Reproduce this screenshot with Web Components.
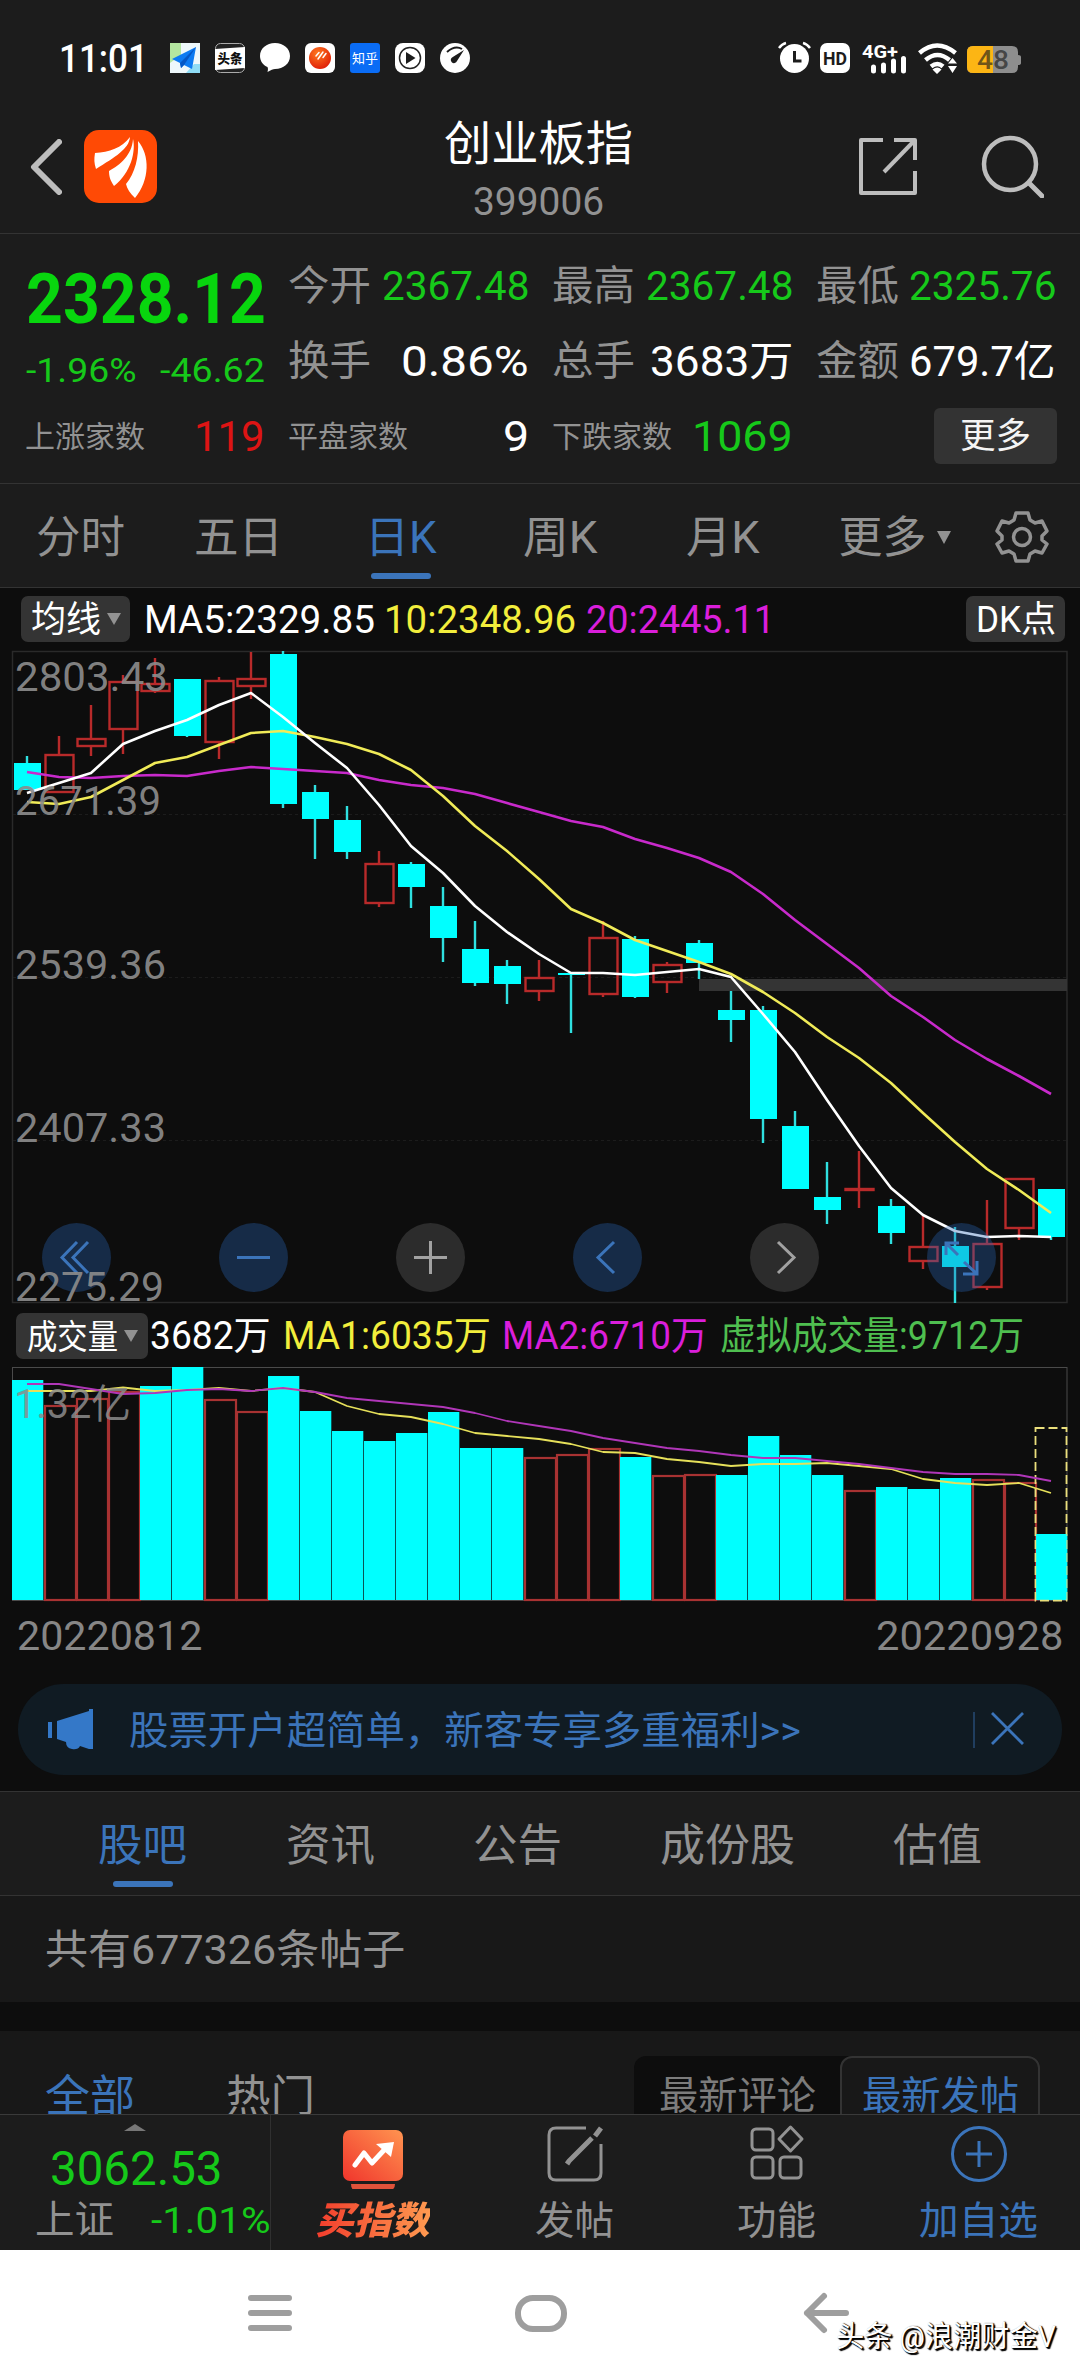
<!DOCTYPE html>
<html lang="zh-CN">
<head>
	<meta charset="utf-8">
	<meta name="viewport" content="width=device-width, initial-scale=1">
	<title>创业板指 399006</title>
	<style type="text/css">
		html, body {
			margin: 0;
			padding: 0;
			background: #0d0d0d;
		}
		body {
			width: 1080px;
			height: 2376px;
			overflow: hidden;
			font-family: Roboto, "Noto Sans CJK SC", sans-serif;
			color: #929292;
		}
	</style>
</head>
<body>
	<stock-page></stock-page>
	<script>
	const BLUE = '#3b74ba';

	function define(name, html, ready) {
		customElements.define(name, class extends HTMLElement {
			connectedCallback() {
				if (this.shadowRoot) return;
				this.attachShadow({mode: 'open'});
				this.shadowRoot.innerHTML = typeof html === 'function' ? html(this) : html;
				if (ready) ready(this);
			}
		});
	}

	// 单行文字，按 w 给出的宽度横向缩放
	define('fit-text', el => `
		<style>
			:host {
				display: block;
				flex: none;
				width: ${el.getAttribute('w')}px;
				font-size: ${el.getAttribute('size')}px;
				line-height: 1;
				height: 1em;
				white-space: nowrap;
			}
			span {
				display: inline-block;
				transform-origin: 0 50%;
			}
		</style>
		<span><slot></slot></span>
	`, el => {
		const span = el.shadowRoot.querySelector('span');
		span.style.transform = `translateY(.03em) scaleX(${el.getAttribute('w') / span.offsetWidth})`;
	});

	define('status-bar', `
		<style>
			:host {
				display: flex;
				box-sizing: border-box;
				height: 100px;
				padding: 16px 59px 0 59px;
				align-items: center;
				justify-content: space-between;
				background: #1c1c1c;
				color: #fff;
			}
			div { display: flex; align-items: center; }
			.left { gap: 15px; }
			.left fit-text { margin-right: 7px; font-weight: 500; }
			svg { display: block; overflow: visible; }
		</style>
		<div class="left">
			<fit-text w="89" size="39">11:01</fit-text>
			<svg width="30" height="30"><path fill="#eef8fb" d="M0 0h30v30H0z"/><path fill="#b4e6a0" d="M0 0h11v12L0 20z"/><path fill="#8fdcf5" d="M16 30l8-9h6v9z"/><path fill="#0d7bf2" d="M26 4L2 16l8 4 1 5 3-3 8 4z"/><path fill="#0557c4" d="M26 4L10 20l1 5 3-3z"/></svg>
			<svg width="30" height="30"><rect x=".5" y=".5" width="29" height="29" rx="5" fill="#222" stroke="#aaa"/><path fill="#fff" d="M0 6l30-2v21L0 27z"/><text x="2.500" y="20" font-size="13" font-weight="900" textLength="25" lengthAdjust="spacingAndGlyphs" fill="#111">头条</text></svg>
			<svg width="30" height="30"><path fill="#fff" d="M15 0c8.500 0 15 5.500 15 13s-6.500 13-15 13c-2 0-4 1-7.500 3 .5-2 .7-3.500 0-5C3 22 0 18 0 13 0 5.500 6.500 0 15 0z"/></svg>
			<svg width="30" height="30"><defs><radialGradient id="o" cx=".4" cy=".3" r=".8"><stop offset="0" stop-color="#ff7a20"/><stop offset="1" stop-color="#dc1505"/></radialGradient></defs><rect width="30" height="30" rx="6" fill="#fff"/><circle cx="15" cy="15" r="11" fill="url(#o)"/><path d="M11 13l3-3.500M13 16l5-7M18 14.500l3-4" stroke="#fff" stroke-width="1.500" stroke-linecap="round"/></svg>
			<svg width="30" height="30"><rect width="30" height="30" rx="3" fill="#0a6cf5"/><text x="2" y="20" font-size="13" textLength="26" lengthAdjust="spacingAndGlyphs" fill="#fff">知乎</text></svg>
			<svg width="30" height="30"><rect width="30" height="30" rx="8" fill="#fff"/><circle cx="15" cy="15" r="10.500" fill="none" stroke="#222" stroke-width="1.500"/><path d="M11 9l9.500 6-9.500 6z" fill="#1c1c1c"/></svg>
			<svg width="30" height="30"><circle cx="15" cy="15" r="15" fill="#fff"/><path d="M7 9q8-7 15-3" fill="none" stroke="#1c1c1c" stroke-width="2"/><path d="M24 7l-7 11a3.200 3.200 0 1 1-4.200-4z" fill="#1c1c1c"/></svg>
		</div>
		<div>
			<svg width="243" height="32" viewBox="777 42 243 32">
				<circle cx="793.500" cy="58.500" r="14.500" fill="#fff"/>
				<path d="M778 48q3-4 7-5M802 43q4 1 7 5" stroke="#fff" stroke-width="2.500" fill="none"/>
				<path d="M793.500 51v10h7" stroke="#1c1c1c" stroke-width="3" fill="none"/>
				<rect x="819" y="43" width="30" height="30" rx="7" fill="#fff"/>
				<text x="822" y="64.500" font-size="18" font-weight="700" textLength="24" lengthAdjust="spacingAndGlyphs" fill="#1c1c1c">HD</text>
				<text x="861" y="57.500" font-size="19" font-weight="700" textLength="36" lengthAdjust="spacingAndGlyphs" fill="#fff">4G+</text>
				<path d="M872.500 67v4M882.500 65v6M892.500 61v10M902.500 58.500v12.500" stroke="#fff" stroke-width="5" stroke-linecap="round"/>
				<g fill="none" stroke="#fff" stroke-width="4.500">
					<path d="M918.500 53q17.500-15 36 0"/><path d="M924.500 60q12-10 24 0"/><path d="M930 66.500q6.500-5 12 0"/>
				</g>
				<path d="M931.500 69.500q5-4 9 0L936 74zM947 63.500l4.500-5.500 4.500 5.500zM947 66h9l-4.500 7z" fill="#fff"/>
				<path d="M972 46h39q6 0 6 6v3q3 0 3 2v6q0 2-3 2v2q0 6-6 6h-39q-6 0-6-6V52q0-6 6-6z" fill="#8e8e8e"/>
				<path d="M972 46h20v27h-20q-6 0-6-6V52q0-6 6-6z" fill="#fcb514"/>
				<text x="976" y="69" font-size="26" font-weight="500" textLength="32" lengthAdjust="spacingAndGlyphs" fill="#1c1c1c" fill-opacity=".65">48</text>
			</svg>
		</div>
	`);

	define('page-header', `
		<style>
			:host {
				display: grid;
				grid-template-columns: 1fr 190px 1fr;
				box-sizing: border-box;
				height: 134px;
				padding: 0 36px 0 29px;
				align-items: center;
				background: #1c1c1c;
				border-bottom: 1px solid #333;
			}
			div { display: flex; align-items: center; }
			.left { gap: 22px; }
			.mid { flex-direction: column; gap: 16px; margin: 6px 0 0 3px; }
			.mid fit-text:first-child { color: #fff; }
			.right { justify-content: flex-end; gap: 64px; }
			svg { display: block; }
		</style>
		<div class="left">
			<svg width="33" height="56"><path d="M30 3L5 28l25 25" fill="none" stroke="#bdbdbd" stroke-width="6" stroke-linecap="round" stroke-linejoin="round"/></svg>
			<svg width="73" height="73" viewBox="0 0 73 73"><rect width="73" height="73" rx="15" fill="#ff4a05"/><g fill="#fff"><path d="M11 23c14-1 27-5 35-16-1 12-15 20-34 32-2-6-2-10-1-16z"/><path d="M49 9c3 12-2 34-19 47-4-6-5-10-5-15 11-6 23-16 24-32z"/><path d="M54 11c12 14 12 39-3 57-5-5-8-9-9-14 9-11 13-27 12-43z"/></g></svg>
		</div>
		<div class="mid">
			<fit-text w="189" size="47">创业板指</fit-text>
			<fit-text w="131" size="38">399006</fit-text>
		</div>
		<div class="right">
			<svg width="59" height="59"><g fill="none" stroke="#bdbdbd" stroke-width="4" stroke-linejoin="round"><path d="M25 3H3v53h54V34"/><path d="M36 3h21v20"/><path d="M57 3L26 35"/></g></svg>
			<svg width="63" height="63"><circle cx="29" cy="29" r="26" fill="none" stroke="#bdbdbd" stroke-width="4.500"/><path d="M48 48l13 13" stroke="#bdbdbd" stroke-width="5" stroke-linecap="round"/></svg>
		</div>
	`);

	define('quote-item', `
		<style>
			:host {
				display: flex;
				align-items: center;
				justify-content: space-between;
				height: 75px;
			}
		</style>
		<slot></slot>
	`);

	define('quote-panel', `
		<style>
			:host {
				display: grid;
				grid-template-columns: 240px 240px 240px 239px;
				grid-template-rows: 75px 75px 75px;
				column-gap: 24px;
				box-sizing: border-box;
				height: 250px;
				padding: 14px 24px 0 25px;
				background: #1c1c1c;
				border-bottom: 1px solid #333;
			}
			.price, .change { box-sizing: border-box; }
			.price { padding: 22px 0 0 1px; }
			.change { padding: 16px 0 0 1px; }
			.green { color: #16c91a; }
			.price .green { font-weight: 700; color: #08d60e; }
			.red { color: #dd1414; }
			.white { color: #fff; }
			button {
				display: flex;
				width: 123px;
				height: 56px;
				padding: 0;
				margin: 0 -1px 0 auto;
				align-items: center;
				justify-content: center;
				border: 0;
				border-radius: 6px;
				background: #333;
				color: #f4f4f4;
				font-family: inherit;
			}
			.label { margin-left: -1px; }
		</style>
		<quote-item class="price"><fit-text class="green" w="240" size="71">2328.12</fit-text></quote-item>
		<quote-item><fit-text class="label" w="83" size="41">今开</fit-text><fit-text class="green" w="147" size="40">2367.48</fit-text></quote-item>
		<quote-item><fit-text class="label" w="83" size="41">最高</fit-text><fit-text class="green" w="147" size="40">2367.48</fit-text></quote-item>
		<quote-item><fit-text class="label" w="83" size="41">最低</fit-text><fit-text class="green" w="147" size="40">2325.76</fit-text></quote-item>
		<quote-item class="change"><fit-text class="green" w="111" size="34">-1.96%</fit-text><fit-text class="green" w="105" size="34">-46.62</fit-text></quote-item>
		<quote-item><fit-text class="label" w="83" size="41">换手</fit-text><fit-text class="white" w="128" size="42">0.86%</fit-text></quote-item>
		<quote-item><fit-text class="label" w="83" size="41">总手</fit-text><fit-text class="white" w="143" size="42">3683万</fit-text></quote-item>
		<quote-item><fit-text class="label" w="83" size="41">金额</fit-text><fit-text class="white" w="147" size="42">679.7亿</fit-text></quote-item>
		<quote-item><fit-text w="120" size="30">上涨家数</fit-text><fit-text class="red" w="71" size="43">119</fit-text></quote-item>
		<quote-item><fit-text class="label" w="120" size="30">平盘家数</fit-text><fit-text class="white" w="26" size="43">9</fit-text></quote-item>
		<quote-item><fit-text class="label" w="120" size="30">下跌家数</fit-text><fit-text class="green" w="101" size="43">1069</fit-text></quote-item>
		<quote-item><button><fit-text w="71" size="35">更多</fit-text></button></quote-item>
	`);

	define('tab-item', el => `
		<style>
			:host {
				display: flex;
				position: relative;
				box-sizing: border-box;
				align-items: center;
				justify-content: center;
				gap: 10px;
				height: 100%;
				padding-top: 3px;
				color: #929292;
			}
			:host([active]) { color: ${BLUE}; }
			:host([active])::after {
				content: "";
				position: absolute;
				left: 50%;
				bottom: 8px;
				width: 60px;
				height: 6px;
				margin-left: -30px;
				border-radius: 3px;
				background: ${BLUE};
			}
		</style>
		<slot></slot>
	`);

	define('tab-bar', el => `
		<style>
			:host {
				display: grid;
				grid-template-columns: ${el.getAttribute('columns')};
				box-sizing: border-box;
				height: 104px;
				background: #1c1c1c;
				border-bottom: 1px solid #333;
			}
			:host([line]) {
				height: 105px;
				border-top: 1px solid #333;
			}
		</style>
		<slot></slot>
	`);

	define('drop-pill', `
		<style>
			:host {
				display: flex;
				box-sizing: border-box;
				flex: none;
				height: 46px;
				align-items: center;
				justify-content: center;
				border-radius: 7px;
				background: #343434;
				color: #fff;
			}
			i {
				display: none;
				border: 7px solid transparent;
				border-top: 12px solid #929292;
				border-bottom: 0;
			}
			:host([arrow]) i { display: block; margin-left: 6px; }
		</style>
		<slot></slot><i></i>
	`);

	// 第 i 根K线中心的横坐标
	const cx = i => 27 + 32 * i;
	const line = (list, color, width) =>
		`<polyline fill="none" stroke="${color}" stroke-width="${width}" stroke-linejoin="round" points="${list.map((y, i) => cx(i) + ',' + y).join(' ')}"/>`;

	// [涨跌, 实体上, 实体下, 最高, 最低]
	const candles = [
		[0,763,790,756,790],[1,755,792,736,793],[1,739,746,705,756],[1,682,729,675,754],[1,684,691,658,693],
		[0,679,736,679,737],[1,681,742,677,759],[1,679,686,652,699],[0,654,804,651,808],[0,792,819,785,859],
		[0,820,852,806,859],[1,864,903,851,907],[0,864,887,862,908],[0,906,938,887,962],[0,949,983,921,986],
		[0,966,984,960,1004],[1,978,991,960,1001],[0,973,975,974,1033],[1,938,994,921,997],[0,939,997,936,998],
		[1,965,982,962,993],[0,943,963,940,979],[0,1010,1020,991,1042],[0,1010,1119,1006,1143],[0,1126,1189,1111,1189],
		[0,1197,1210,1162,1224],[1,1189,1190,1151,1208],[0,1206,1233,1199,1244],[1,1247,1261,1214,1269],
		[0,1246,1267,1227,1303],[1,1244,1287,1200,1290],[1,1179,1228,1179,1240],[0,1189,1237,1189,1240]
	];
	const ma5 = [793,783,773,744,731,720,705,693,717,743,768,805,846,873,906,932,954,973,973,975,972,969,977,1014,1052,1100,1146,1188,1215,1231,1237,1236,1237];
	const ma10 = [802,804,797,780,763,757,745,733,731,737,744,754,770,796,826,851,879,909,923,940,951,962,974,992,1013,1037,1058,1083,1113,1142,1169,1190,1213];
	const ma20 = [772,777,778,776,775,776,771,767,769,771,773,780,785,788,794,803,812,821,827,839,848,858,872,894,920,944,968,996,1017,1040,1059,1076,1094];

	function drawCandle([up, top, bottom, high, low], i) {
		const x = cx(i);
		if (up) {
			return `<g fill="none" stroke="#b82a2a" stroke-width="2.400"><path d="M${x} ${high}V${top}M${x} ${bottom}V${low}"/><rect x="${x - 13.5}" y="${top}" width="28" height="${bottom - top}"/></g>`;
		}
		return `<path d="M${x} ${high}V${low}" stroke="#2fe0e0" stroke-width="2.400"/><rect x="${x - 13}" y="${top}" width="27" height="${bottom - top}" fill="#00ffff"/>`;
	}

	const axis = (y, text, w) =>
		`<text x="15" y="${y}" font-size="41" textLength="${w}" lengthAdjust="spacingAndGlyphs" fill="#8c8c8c" fill-opacity=".92">${text}</text>`;

	define('kline-chart', `
		<style>
			:host { display: block; position: relative; height: 663px; }
			svg { display: block; overflow: visible; }
			nav {
				display: flex;
				position: absolute;
				left: 42px;
				top: 578px;
				gap: 108px;
			}
			nav svg { border-radius: 50%; background: rgba(40, 100, 180, .35); stroke: ${BLUE}; fill: none; stroke-width: 3; }
			nav svg.off { background: rgba(255, 255, 255, .13); stroke: #a2a2a2; }
			.axis { position: relative; margin-top: -663px; }
		</style>
		<svg width="1080" height="663" viewBox="0 645 1080 663">
			<rect x="12.500" y="651.500" width="1054.500" height="651" fill="none" stroke="#2a2a2a" stroke-width="1.500"/>
			<path d="M13 814.500H1067M13 977.500H1067M13 1140.500H1067" stroke="#1c1c1c" stroke-dasharray="3 3"/>
			<rect x="699" y="979" width="368" height="12" fill="#343434"/>
			${candles.map(drawCandle).join('')}
			${line(ma20, '#c82acb', 2.6)}
			${line(ma10, '#f0eb58', 2.6)}
			${line(ma5, '#fff', 2.6)}
		</svg>
		<nav>
			<svg width="69" height="69"><path d="M35 19L20 34.500 35 50M46 19L31 34.500 46 50"/></svg>
			<svg width="69" height="69"><path d="M18 34.500h33"/></svg>
			<svg class="off" width="69" height="69"><path d="M18 34.500h33M34.500 18v33"/></svg>
			<svg width="69" height="69"><path d="M41 19L25 34.500 41 50"/></svg>
			<svg class="off" width="69" height="69"><path d="M28 19l16 15.500L28 50"/></svg>
			<svg width="69" height="69"><path d="M19 32V20h13M19 20l12 12M37 39l13 12M36 51h14V38"/></svg>
		</nav>
		<svg class="axis" width="1080" height="663" viewBox="0 645 1080 663">
			${axis(691, '2803.43', 153)}${axis(815, '2671.39', 146)}${axis(979, '2539.36', 151)}${axis(1142, '2407.33', 151)}${axis(1301, '2275.29', 149)}
		</svg>
	`);

	const volumes = [
		[0,1380],[1,1406],[1,1399],[1,1392],[0,1386],[0,1367],[1,1400],[1,1412],[0,1376],[0,1411],[0,1431],
		[0,1441],[0,1433],[0,1412],[0,1448],[0,1448],[1,1458],[1,1455],[1,1449],[0,1457],[1,1476],[1,1475],
		[0,1475],[0,1436],[0,1455],[0,1475],[1,1491],[0,1487],[0,1489],[0,1478],[1,1480],[1,1483],[0,1534]
	];
	const vma1 = [1391,1391,1391,1387.5,1391,1390,1388,1391,1388,1392,1406,1414,1417,1424,1433,1436,1439,1444,1452,1453,1459,1462,1466,1464,1464,1463,1466,1469,1479,1483,1485,1483,1493];
	const vma2 = [1384,1384,1389,1394,1393,1390,1389,1391,1388,1392,1398,1401,1404,1407,1413,1421,1426,1431,1438,1443,1448,1451,1455,1458,1458,1461,1464,1468,1472,1474,1474,1475,1481];

	define('volume-chart', `
		<style>
			:host { display: block; height: 242px; }
			svg { display: block; overflow: visible; }
		</style>
		<svg width="1080" height="242" viewBox="0 1363 1080 242">
			<rect x="12.500" y="1367.500" width="1054.500" height="233" fill="none" stroke="#4a4a4a"/>
			${volumes.map(([up, y], i) => up
				? `<rect x="${13 + 32 * i}" y="${y}" width="31" height="${1600 - y}" fill="none" stroke="#a83232" stroke-width="2.200"/>`
				: `<rect x="${12 + 32 * i}" y="${y}" width="31.3" height="${1600 - y}" fill="#00ffff"/>`).join('')}
			<rect x="1035.500" y="1428" width="31" height="172.500" fill="none" stroke="#eadf7c" stroke-width="1.800" stroke-dasharray="9 4"/>
			<rect x="1036.500" y="1534" width="30" height="65.500" fill="#00ffff"/>
			${line(vma1, '#e6e05a', 1.8)}
			${line(vma2, '#b036b8', 1.8)}
			<text x="14" y="1418" font-size="40" textLength="117" lengthAdjust="spacingAndGlyphs" fill="#8c8c8c" fill-opacity=".85">1.32亿</text>
		</svg>
	`);

	define('chart-row', el => `
		<style>
			:host {
				display: flex;
				height: ${el.getAttribute('h')}px;
				box-sizing: border-box;
				align-items: center;
			}
		</style>
		<slot></slot>
	`);

	define('promo-banner', `
		<style>
			:host {
				display: flex;
				box-sizing: border-box;
				height: 91px;
				margin: 30px 18px 16px;
				padding: 0 37px 0 29px;
				align-items: center;
				border-radius: 46px;
				background: #101b23;
				color: ${BLUE};
			}
			fit-text { margin: 1px auto 0 35px; }
			svg { display: block; }
		</style>
		<svg width="47" height="42"><path fill="#3478c8" d="M1 13h4v16H1zM10 12L42 2V0h4v40h-4l-9-3q-2 4-8 3-6-1-6-7l-9-3z"/></svg>
		<fit-text w="672" size="39">股票开户超简单，新客专享多重福利&gt;&gt;</fit-text>
		<svg width="52" height="38"><path d="M1 1v36" stroke="${BLUE}" stroke-width="1" opacity=".8"/><path d="M19 2l31 31M50 2L19 33" stroke="${BLUE}" stroke-width="2.800"/></svg>
	`);

	define('post-list', `
		<style>
			:host {
				display: block;
				height: 218px;
				overflow: hidden;
			}
			.count {
				display: flex;
				box-sizing: border-box;
				height: 106px;
				padding: 0 0 0 45px;
				align-items: center;
				background: #181818;
			}
			.filter {
				display: flex;
				height: 83px;
				margin-top: 29px;
				padding: 0 40px 0 45px;
				align-items: flex-start;
				background: #181818;
				box-sizing: border-box;
			}
			.filter > fit-text { margin-top: 43px; }
			.all { color: ${BLUE}; margin-right: 91px; }
			.seg {
				display: flex;
				margin: 25px 0 0 auto;
				width: 406px;
				height: 90px;
				background: #0d0d0d;
				border-radius: 12px;
				color: #7c7c7c;
			}
			.seg div {
				display: flex;
				width: 206px;
				justify-content: center;
				padding-top: 20px;
				box-sizing: border-box;
			}
			.seg .on {
				width: 200px;
				padding-top: 18px;
				border: 2px solid #333;
				border-radius: 12px;
				background: #181818;
				color: ${BLUE};
			}
		</style>
		<div class="count"><fit-text w="360" size="41">共有677326条帖子</fit-text></div>
		<div class="filter">
			<fit-text class="all" w="90" size="44">全部</fit-text>
			<fit-text w="89" size="44">热门</fit-text>
			<div class="seg">
				<div><fit-text w="157" size="39">最新评论</fit-text></div>
				<div class="on"><fit-text w="157" size="39">最新发帖</fit-text></div>
			</div>
		</div>
	`);

	define('bottom-bar', `
		<style>
			:host {
				display: grid;
				grid-template-columns: 271px repeat(4, 202px);
				box-sizing: border-box;
				height: 136px;
				border-top: 1px solid #3a3a3a;
				background: #1c1c1c;
			}
			.index { border-right: 1px solid #303030; }
			.index > i {
				display: block;
				width: 0;
				margin: 9px 0 0 124px;
				border: 11px solid transparent;
				border-top: 0;
				border-bottom: 7px solid #777;
			}
			.green { color: #16c91a; }
			.index > fit-text { margin: 13px 0 0 50px; }
			.row { display: flex; justify-content: space-between; align-items: center; padding: 8px 0 0 35px; }
			.item { display: flex; flex-direction: column; align-items: center; padding: 9px 0 0 1px; }
			.item fit-text { margin-top: 17px; }
			.blue { color: ${BLUE}; }
			.buy b {
				display: block;
				margin-top: 6px;
				font: italic 900 38px/46px "Noto Sans CJK SC", sans-serif;
				background: linear-gradient(90deg, #f23c2c, #ff9a50);
				-webkit-background-clip: text;
				color: transparent;
			}
			svg { display: block; fill: none; stroke: #929292; stroke-width: 3; }
			.buy svg { margin-top: 1px; stroke: none; }
			.blue svg { stroke: ${BLUE}; }
		</style>
		<div class="index">
			<i></i>
			<fit-text class="green" w="173" size="48">3062.53</fit-text>
			<div class="row"><fit-text w="79" size="39">上证</fit-text><fit-text class="green" w="119" size="37">-1.01%</fit-text></div>
		</div>
		<div class="item buy">
			<svg width="60" height="64" viewBox="0 -5 60 64">
				<defs><linearGradient id="g" x1="0" y1="1" x2="1" y2="0"><stop offset="0" stop-color="#f0352c"/><stop offset="1" stop-color="#ff9450"/></linearGradient></defs>
				<rect y="0" width="60" height="51" rx="7" fill="url(#g)"/>
				<path d="M8 54h44q0 6-5 6H12q-4 0-4-6z" fill="#e0523a"/>
				<path d="M12 35l9-12 8 10 14-15" stroke="#fff" stroke-width="5" stroke-linecap="round" stroke-linejoin="round"/>
				<path d="M33 14l18-2-3 15z" fill="#fff"/>
			</svg>
			<b>买指数</b>
		</div>
		<div class="item">
			<svg width="58" height="60"><path d="M40 4H10q-7 0-7 7v38q0 7 7 7h38q7 0 7-7V20"/><path d="M55 4L49 12M46 14L23 37l-2 3" stroke-width="5"/></svg>
			<fit-text w="79" size="39">发帖</fit-text>
		</div>
		<div class="item">
			<svg width="56" height="60"><rect x="3" y="5" width="21" height="21" rx="4"/><rect x="3" y="33" width="21" height="21" rx="4"/><rect x="31" y="33" width="21" height="21" rx="4"/><path d="M41.500 3L53 15 41.500 27 30 15z" stroke-linejoin="round"/></svg>
			<fit-text w="79" size="39">功能</fit-text>
		</div>
		<div class="item blue">
			<svg width="60" height="60"><circle cx="30" cy="30" r="26.500"/><path d="M17 30h26M30 17v26"/></svg>
			<fit-text w="119" size="39">加自选</fit-text>
		</div>
	`);

	define('system-nav', `
		<style>
			:host {
				display: grid;
				grid-template-columns: 405px 270px 405px;
				position: relative;
				height: 126px;
				background: #fff;
				align-items: center;
			}
			svg { display: block; fill: none; stroke: #9e9e9e; stroke-width: 6; stroke-linecap: round; stroke-linejoin: round; }
			.menu { margin-left: 246px; }
			.home { margin-left: 108px; }
			.back { margin-left: 127px; }
			.mark {
				position: absolute;
				left: 836px;
				top: 72px;
				color: #fff;
				text-shadow: 1px 1px 1px #000, 2px 2px 1px #000, 1px 0 1px #000;
			}
		</style>
		<svg class="menu" width="50" height="44"><path d="M5 7h38M5 22h38M5 37h38"/></svg>
		<svg class="home" width="56" height="44"><rect x="5" y="7" width="46" height="31" rx="15"/></svg>
		<svg class="back" width="50" height="46"><path d="M22 6L5 23l17 17M5 23h39"/></svg>
		<fit-text class="mark" w="220" size="29">头条 @浪潮财金V</fit-text>
	`);

	define('stock-page', `
		<style>
			:host { display: block; width: 1080px; }
			.tri {
				border: 7.500px solid transparent;
				border-top: 13px solid #929292;
				border-bottom: 0;
			}
			.yellow { color: #f2ee3c; }
			.pink { color: #da1edb; }
			.green { color: #4fbf50; }
			.white { color: #fff; }
			.dates { align-items: flex-start; justify-content: space-between; padding: 10px 17px 0; color: #868686; }
			svg { display: block; }
		</style>
		<status-bar></status-bar>
		<page-header></page-header>
		<quote-panel></quote-panel>
		<tab-bar columns="161px 154px 172px 147px 178px 165px 89px">
			<tab-item><fit-text w="89" size="44">分时</fit-text></tab-item>
			<tab-item><fit-text w="89" size="44">五日</fit-text></tab-item>
			<tab-item active><fit-text w="72" size="44">日K</fit-text></tab-item>
			<tab-item><fit-text w="75" size="44">周K</fit-text></tab-item>
			<tab-item><fit-text w="74" size="44">月K</fit-text></tab-item>
			<tab-item><fit-text w="88" size="44">更多</fit-text><i class="tri"></i></tab-item>
			<tab-item><svg width="54" height="54" viewBox="-27 -27 54 54" fill="none" stroke="#929292" stroke-width="3.500" stroke-linejoin="round"><circle r="8.500"/><path d="M-6-24H6L8-17 13-14 20-16 25-6 20-1V3L25 7 20 16 13 14 8 17 6 24H-6L-8 17-13 14-20 16-25 7-20 3V-1L-25-6-20-16-13-14-8-17Z"/></svg></tab-item>
		</tab-bar>
		<chart-row h="57" style="padding:4px 15px 0 21px">
			<drop-pill arrow style="width:109px"><fit-text w="70" size="36">均线</fit-text></drop-pill>
			<fit-text class="white" w="231" size="38" style="margin-left:14px">MA5:2329.85</fit-text>
			<fit-text class="yellow" w="192" size="38" style="margin-left:9px">10:2348.96</fit-text>
			<fit-text class="pink" w="189" size="38" style="margin-left:10px">20:2445.11</fit-text>
			<drop-pill style="width:99px;margin-left:auto"><fit-text w="80" size="36">DK点</fit-text></drop-pill>
		</chart-row>
		<kline-chart></kline-chart>
		<chart-row h="55" style="padding-left:16px">
			<drop-pill arrow style="width:132px"><fit-text w="91" size="34">成交量</fit-text></drop-pill>
			<fit-text class="white" w="121" size="39" style="margin-left:2px">3682万</fit-text>
			<fit-text class="yellow" w="208" size="39" style="margin-left:12px">MA1:6035万</fit-text>
			<fit-text class="pink" w="206" size="39" style="margin-left:11px">MA2:6710万</fit-text>
			<fit-text class="green" w="304" size="39" style="margin-left:12px">虚拟成交量:9712万</fit-text>
		</chart-row>
		<volume-chart></volume-chart>
		<chart-row class="dates" h="49">
			<fit-text w="185" size="41">20220812</fit-text>
			<fit-text w="187" size="41">20220928</fit-text>
		</chart-row>
		<promo-banner></promo-banner>
		<tab-bar line columns="49px 187px 189px 185px 235px 185px">
			<i></i>
			<tab-item active><fit-text w="89" size="44">股吧</fit-text></tab-item>
			<tab-item><fit-text w="89" size="44">资讯</fit-text></tab-item>
			<tab-item><fit-text w="89" size="44">公告</fit-text></tab-item>
			<tab-item><fit-text w="135" size="44">成份股</fit-text></tab-item>
			<tab-item><fit-text w="89" size="44">估值</fit-text></tab-item>
		</tab-bar>
		<post-list></post-list>
		<bottom-bar></bottom-bar>
		<system-nav></system-nav>
	`);
	</script>
</body>
</html>
